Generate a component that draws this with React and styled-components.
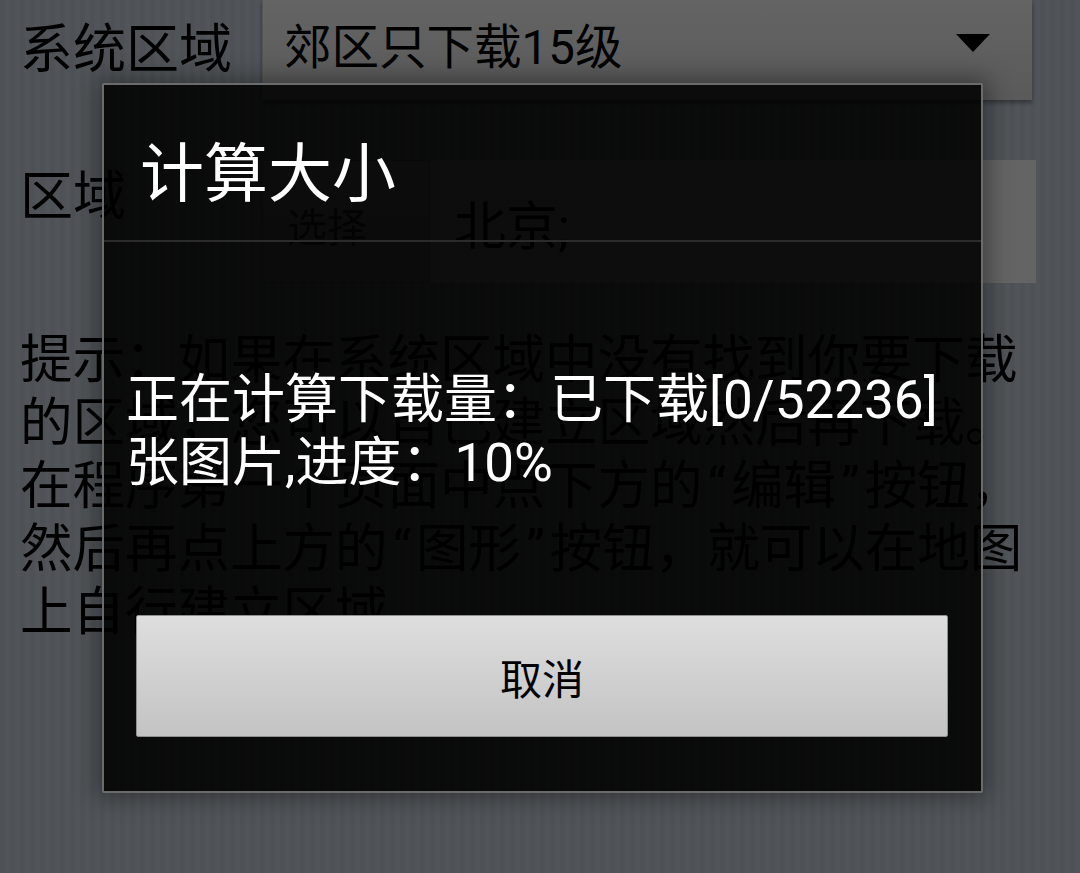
import React from "react";
import styled, { createGlobalStyle } from "styled-components";

const GlobalStyle = createGlobalStyle`
  html, body {
    margin: 0;
    padding: 0;
  }
  body {
    font-family: Roboto, "Noto Sans CJK SC", sans-serif;
    background: #4f5357;
  }
  * {
    box-sizing: border-box;
  }
`;

const Screen = styled.div`
  position: relative;
  width: 1080px;
  height: 873px;
  overflow: hidden;
  background: repeating-linear-gradient(
    90deg,
    #4e5256 0px,
    #4e5256 5px,
    #51555a 5px,
    #51555a 10px
  );
  color: #000;
`;

const Row = styled.div`
  display: flex;
  height: ${(p) => p.height}px;
  margin-top: ${(p) => p.top || 0}px;
`;

const Label = styled.div`
  width: 262px;
  padding-left: 20px;
  font-size: 53px;
  line-height: 63px;
  align-self: ${(p) => (p.top ? "flex-start" : "center")};
  padding-top: ${(p) => p.top || 0}px;
`;

const Spinner = styled.div`
  flex: 1;
  margin-right: 48px;
  display: flex;
  align-items: center;
  justify-content: space-between;
  padding: 0 42px 14px 21px;
  background: linear-gradient(#646464, #5a5a5a);
  border-left: 1px solid #555;
  box-shadow: 0 3px 4px rgba(0, 0, 0, 0.35);
  font-size: 47.5px;
`;

const SelectButton = styled.div`
  width: 168px;
  display: flex;
  align-items: center;
  justify-content: flex-start;
  padding: 6px 0 0 24px;
  background: linear-gradient(#5e5e5e, #565656);
  border: 1px solid #4a4a4a;
  font-size: 40px;
  color: #1a1a1a;
`;

const EditBox = styled.div`
  flex: 1;
  margin-right: 44px;
  display: flex;
  align-items: center;
  padding-left: 24px;
  padding-top: 2px;
  background: #646464;
  font-size: 52px;
`;

const Hint = styled.div`
  margin-top: 46px;
  padding-left: 20px;
  font-size: 52.5px;
  line-height: 63px;
`;

const HintLine = styled.div`
  white-space: nowrap;
`;

const Quote = styled.span`
  margin: 0 5px;
`;

const Dialog = styled.div`
  position: absolute;
  left: 102px;
  top: 83px;
  width: 881px;
  border: 2px solid #6b6b6b;
  border-radius: 2px;
  background: rgba(0, 0, 0, 0.87);
  box-shadow: 0 0 22px 6px rgba(0, 0, 0, 0.35);
  display: flex;
  flex-direction: column;
  padding-bottom: 54px;
`;

const TitleBar = styled.div`
  height: 155px;
  display: flex;
  align-items: center;
  padding: 10px 0 0 36px;
  color: #fff;
  font-size: 64px;
`;

const Divider = styled.div`
  height: 2px;
  background: #2b2b2b;
`;

const Message = styled.div`
  margin-top: 127px;
  padding: 0 22px;
  color: #fff;
  font-size: 53px;
  line-height: 63px;
`;

const CancelButton = styled.button`
  margin: 120px 33px 0 32px;
  height: 122px;
  border: 1px solid #8f8f8f;
  border-radius: 2px;
  background: linear-gradient(#dedede, #c3c3c3);
  font-family: Roboto, "Noto Sans CJK SC", sans-serif;
  font-size: 42px;
  color: #000;
  padding: 0;
`;

const Arrow = () => (
  <svg width="34" height="18" viewBox="0 0 34 18">
    <polygon points="0,0 34,0 17,18" fill="#000" />
  </svg>
);

const App = () => {
  return (
    <>
      <GlobalStyle />
      <Screen>
        <Row height={100}>
          <Label>系统区域</Label>
          <Spinner>
            <span>郊区只下载15级</span>
            <Arrow />
          </Spinner>
        </Row>
        <Row height={123} top={60}>
          <Label top={6}>区域</Label>
          <SelectButton>选择</SelectButton>
          <EditBox>北京;</EditBox>
        </Row>
        <Hint>
          <HintLine>提示：如果在系统区域中没有找到你要下载</HintLine>
          <HintLine>的区域，您可以自己建立区域然后再下载。</HintLine>
          <HintLine>
            在程序第一个页面中点下方的<Quote>“</Quote>编辑<Quote>”</Quote>按钮，
          </HintLine>
          <HintLine>
            然后再点上方的<Quote>“</Quote>图形<Quote>”</Quote>按钮，就可以在地图
          </HintLine>
          <HintLine>上自行建立区域</HintLine>
        </Hint>

        <Dialog>
          <TitleBar>计算大小</TitleBar>
          <Divider />
          <Message>
            正在计算下载量：已下载[0/52236]
            <br />
            张图片,进度：10%
          </Message>
          <CancelButton>取消</CancelButton>
        </Dialog>
      </Screen>
    </>
  );
};

export default App;
